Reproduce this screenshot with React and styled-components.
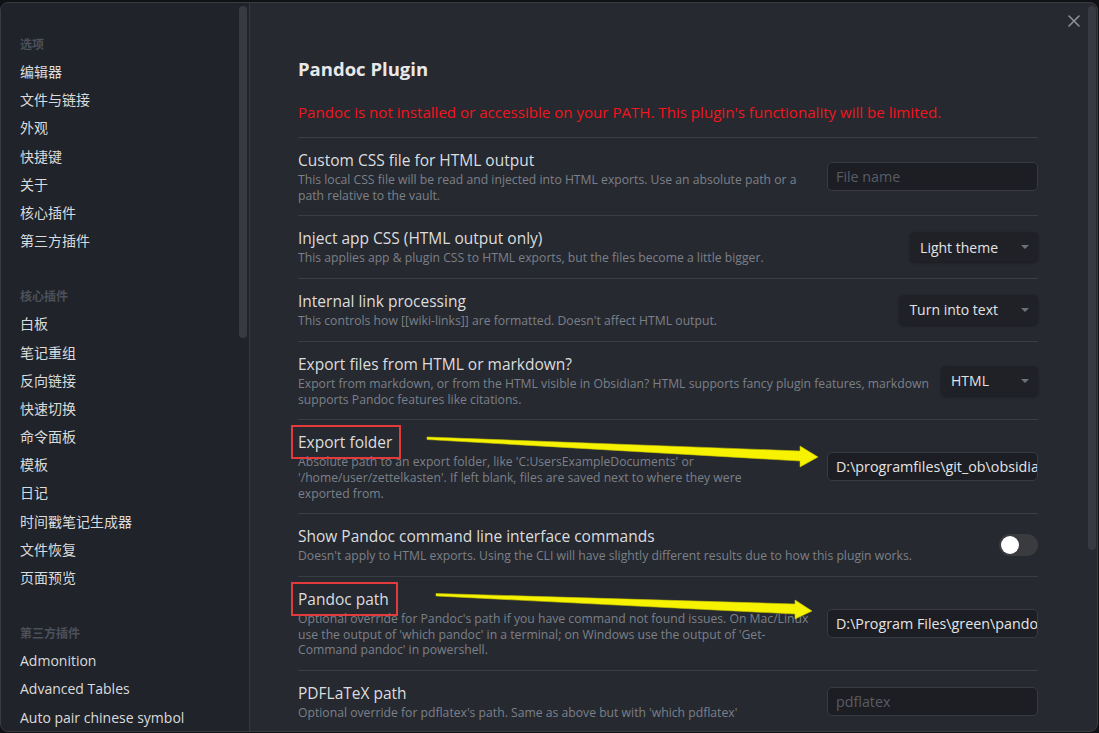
import React from "react";
import styled, { createGlobalStyle } from "styled-components";

const GlobalStyle = createGlobalStyle`
  html, body {
    margin: 0;
    padding: 0;
    background: #101114;
  }
  * {
    box-sizing: border-box;
  }
`;

const Frame = styled.div`
  position: relative;
  width: 1099px;
  height: 733px;
  padding: 2px 1px 1px 0;
  background: #101114;
  font-family: "Open Sans", "Noto Sans CJK SC", sans-serif;
`;

const Window = styled.div`
  display: flex;
  height: 100%;
  border: 1px solid #3a3c42;
  border-radius: 8px;
  overflow: hidden;
  background: #262930;
  position: relative;
`;

//Sidebar

const Sidebar = styled.nav`
  position: relative;
  width: 249px;
  flex-shrink: 0;
  padding: 28px 0 0 19px;
  background: #202329;
  border-right: 1px solid #34373e;
`;

const SideScroll = styled.div`
  position: absolute;
  right: 2px;
  top: 3px;
  width: 8px;
  height: 332px;
  border-radius: 4px;
  background: #373a41;
`;

const Group = styled.div`
  margin-bottom: 28px;
`;

const GroupTitle = styled.div`
  height: 27px;
  line-height: 27px;
  font-size: 12px;
  font-weight: 700;
  color: #4b505a;
`;

const NavItem = styled.div`
  height: 28.2px;
  line-height: 28.2px;
  font-size: 14px;
  color: #dadbdd;
  white-space: nowrap;
`;

//Content

const Content = styled.main`
  position: relative;
  flex: 1;
  padding: 53px 59px 0 48px;
  overflow: hidden;
`;

const MainScroll = styled.div`
  position: absolute;
  right: 1px;
  top: 3px;
  width: 8px;
  height: 544px;
  border-radius: 4px;
  background: #373a41;
`;

const CloseButton = styled.div`
  position: absolute;
  top: 8px;
  right: 13px;
  width: 20px;
  height: 20px;
  display: flex;
  align-items: center;
  justify-content: center;
  color: #8d9098;
`;

const Title = styled.h2`
  margin: 0;
  font-size: 18.5px;
  line-height: 26px;
  font-weight: 700;
  color: #e8e8ea;
`;

const ErrorText = styled.p`
  margin: 20px 0 0;
  font-size: 15.1px;
  line-height: 20px;
  color: #f3141c;
`;

const SettingList = styled.div`
  margin-top: 15px;
`;

const Setting = styled.div`
  display: flex;
  align-items: center;
  gap: 14px;
  padding: 12px 0;
  border-top: 1px solid #3a3d44;
`;

const Info = styled.div`
  flex: 1;
  min-width: 0;
`;

const Name = styled.div`
  width: fit-content;
  font-size: 15.5px;
  line-height: 20px;
  color: #dcdddf;
  outline: ${(p) => (p.$marked ? "2px solid #e33b3b" : "none")};
  outline-offset: 5px;
  padding-right: ${(p) => (p.$marked ? "2px" : "0")};
`;

const Desc = styled.div`
  margin-top: 2px;
  font-size: 12.2px;
  line-height: 15.7px;
  color: #7c8089;
  white-space: nowrap;
`;

const TextInput = styled.div`
  width: 211px;
  height: 29px;
  flex-shrink: 0;
  padding: 0 8px;
  display: flex;
  align-items: center;
  overflow: hidden;
  white-space: nowrap;
  font-size: 14.3px;
  color: ${(p) => (p.$empty ? "#585c65" : "#e4e4e6")};
  background: #1c1e23;
  border: 1px solid #383b42;
  border-radius: 5px;
`;

const Dropdown = styled.div`
  position: relative;
  height: 30px;
  min-width: 97px;
  flex-shrink: 0;
  padding: 0 40px 0 10px;
  display: flex;
  align-items: center;
  font-size: 14px;
  color: #e2e3e5;
  background: #1f2127;
  border-radius: 5px;
  box-shadow: 0 1px 3px rgba(0, 0, 0, 0.35);
`;

const Caret = styled.span`
  position: absolute;
  right: 9px;
  top: 13px;
  width: 0;
  height: 0;
  border-left: 4px solid transparent;
  border-right: 4px solid transparent;
  border-top: 4px solid #6c7079;
`;

const Toggle = styled.div`
  width: 39px;
  height: 22px;
  flex-shrink: 0;
  padding: 2px;
  border-radius: 11px;
  background: #3a3b3f;
`;

const Knob = styled.div`
  width: 18px;
  height: 18px;
  border-radius: 50%;
  background: #ffffff;
`;

const ArrowLayer = styled.svg`
  position: absolute;
  left: 0;
  top: 0;
  pointer-events: none;
`;

const groups = [
  {
    title: "选项",
    items: ["编辑器", "文件与链接", "外观", "快捷键", "关于", "核心插件", "第三方插件"],
  },
  {
    title: "核心插件",
    items: [
      "白板",
      "笔记重组",
      "反向链接",
      "快速切换",
      "命令面板",
      "模板",
      "日记",
      "时间戳笔记生成器",
      "文件恢复",
      "页面预览",
    ],
  },
  {
    title: "第三方插件",
    items: ["Admonition", "Advanced Tables", "Auto pair chinese symbol"],
  },
];

const settings = [
  {
    name: "Custom CSS file for HTML output",
    desc: [
      "This local CSS file will be read and injected into HTML exports. Use an absolute path or a",
      "path relative to the vault.",
    ],
    control: { type: "input", placeholder: "File name" },
  },
  {
    name: "Inject app CSS (HTML output only)",
    desc: ["This applies app & plugin CSS to HTML exports, but the files become a little bigger."],
    control: { type: "select", value: "Light theme" },
  },
  {
    name: "Internal link processing",
    desc: ["This controls how [[wiki-links]] are formatted. Doesn't affect HTML output."],
    control: { type: "select", value: "Turn into text" },
  },
  {
    name: "Export files from HTML or markdown?",
    desc: [
      "Export from markdown, or from the HTML visible in Obsidian? HTML supports fancy plugin features, markdown",
      "supports Pandoc features like citations.",
    ],
    control: { type: "select", value: "HTML" },
  },
  {
    name: "Export folder",
    marked: true,
    desc: [
      "Absolute path to an export folder, like 'C:UsersExampleDocuments' or",
      "'/home/user/zettelkasten'. If left blank, files are saved next to where they were",
      "exported from.",
    ],
    control: { type: "input", value: "D:\\programfiles\\git_ob\\obsidian" },
  },
  {
    name: "Show Pandoc command line interface commands",
    desc: [
      "Doesn't apply to HTML exports. Using the CLI will have slightly different results due to how this plugin works.",
    ],
    control: { type: "toggle" },
  },
  {
    name: "Pandoc path",
    marked: true,
    desc: [
      "Optional override for Pandoc's path if you have command not found issues. On Mac/Linux",
      "use the output of 'which pandoc' in a terminal; on Windows use the output of 'Get-",
      "Command pandoc' in powershell.",
    ],
    control: { type: "input", value: "D:\\Program Files\\green\\pandoc\\" },
  },
  {
    name: "PDFLaTeX path",
    desc: ["Optional override for pdflatex's path. Same as above but with 'which pdflatex'"],
    control: { type: "input", placeholder: "pdflatex" },
  },
];

const Control = ({ control }) => {
  if (control.type === "input") {
    return control.value ? (
      <TextInput>{control.value}</TextInput>
    ) : (
      <TextInput $empty>{control.placeholder}</TextInput>
    );
  }
  if (control.type === "select") {
    return (
      <Dropdown>
        {control.value}
        <Caret />
      </Dropdown>
    );
  }
  return (
    <Toggle>
      <Knob />
    </Toggle>
  );
};

const App = () => (
  <>
    <GlobalStyle />
    <Frame>
      <Window>
        <Sidebar>
          {groups.map((g) => (
            <Group key={g.title}>
              <GroupTitle>{g.title}</GroupTitle>
              {g.items.map((item) => (
                <NavItem key={item}>{item}</NavItem>
              ))}
            </Group>
          ))}
          <SideScroll />
        </Sidebar>

        <Content>
          <Title>Pandoc Plugin</Title>
          <ErrorText>
            Pandoc is not installed or accessible on your PATH. This plugin's functionality will be
            limited.
          </ErrorText>
          <SettingList>
            {settings.map((s) => (
              <Setting key={s.name}>
                <Info>
                  <Name $marked={s.marked}>{s.name}</Name>
                  <Desc>
                    {s.desc.map((line, i) => (
                      <div key={i}>{line}</div>
                    ))}
                  </Desc>
                </Info>
                <Control control={s.control} />
              </Setting>
            ))}
          </SettingList>
          <MainScroll />
          <CloseButton>
            <svg width="12" height="12" viewBox="0 0 12 12">
              <path d="M1 1 L11 11 M11 1 L1 11" stroke="currentColor" strokeWidth="1.6" strokeLinecap="round" />
            </svg>
          </CloseButton>
        </Content>
      </Window>

      <ArrowLayer width="1099" height="733" viewBox="0 0 1099 733">
        <polygon
          points="427,437 800,451 800,446 818,457 800,467 800,461 427,439.5"
          fill="#f7f300"
          stroke="#c8c400"
          strokeWidth="0.6"
        />
        <polygon
          points="436,593.5 795,604 795,600 812,611 795,619 795,614 436,596"
          fill="#f7f300"
          stroke="#c8c400"
          strokeWidth="0.6"
        />
      </ArrowLayer>
    </Frame>
  </>
);

export default App;
